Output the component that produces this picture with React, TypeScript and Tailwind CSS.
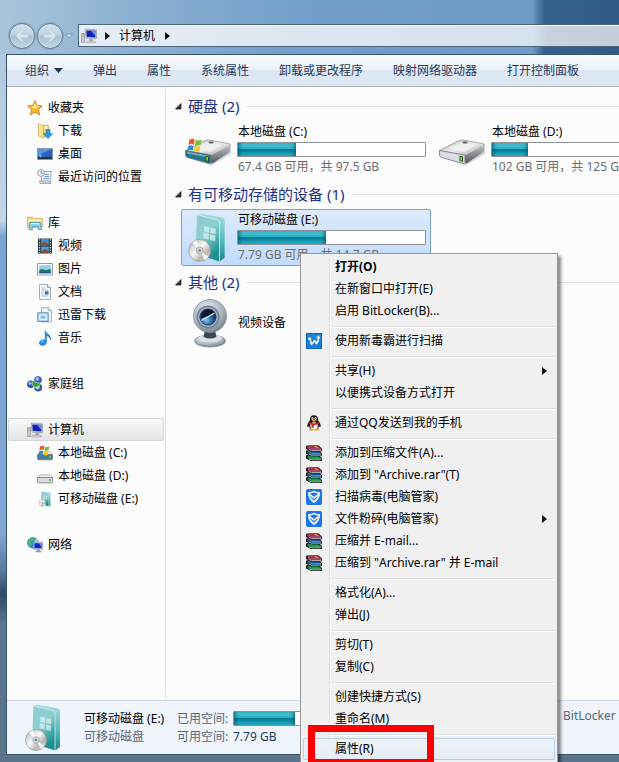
import type { ReactNode } from "react";

interface NavItem {
  label: string;
  icon: ReactNode;
  root?: boolean;
  active?: boolean;
}

interface MenuItem {
  label: string;
  icon?: ReactNode;
  bold?: boolean;
  submenu?: boolean;
  highlighted?: boolean;
}

const ComputerIcon = () => (
  <svg width="16" height="16" viewBox="0 0 16 16" aria-hidden="true">
    <path d="M.5 5.5h3v9h-3z" fill="#c9ced3" stroke="#8b9299" strokeWidth=".7" />
    <path d="M1.3 7h1.4M1.3 8.5h1.4" stroke="#6e9a55" strokeWidth=".7" />
    <path d="M4 1.2l11.5.6v9L5 10.2z" fill="#d5d9dd" stroke="#8d949b" strokeWidth=".7" />
    <path d="M5.2 2.4l9.2.4v6.8l-8.6-.5z" fill="#1420b4" />
    <path d="M10 2.7l4.4.1v5.4z" fill="#6a86ef" />
    <path d="M8.5 11h3.2l.6 2H8z" fill="#a3a9b0" />
    <path d="M5.5 13.2h8.5l1 1.6H4.5z" fill="#d7dade" stroke="#8d949b" strokeWidth=".5" />
  </svg>
);

const StarIcon = () => (
  <svg width="16" height="16" viewBox="0 0 16 16" aria-hidden="true">
    <path d="M8 .7l2.1 4.8 5.2.5-3.9 3.5 1.2 5.4L8 12l-4.7 2.9 1.3-5.4L.7 6l5.1-.5z" fill="#fbb52e" stroke="#e0702b" strokeWidth=".9" />
    <path d="M8 2.8l1.4 3.5 3.3.4-5.2 1.8-4.2-1.7 3.2-.4z" fill="#fff09a" />
  </svg>
);

const DownloadIcon = () => (
  <svg width="16" height="16" viewBox="0 0 16 16" aria-hidden="true">
    <path d="M5 2.500h6.500v11.300H5z" fill="#f2cb5f" stroke="#cfa644" strokeWidth=".7" />
    <path d="M1.500.8L6.500 2.500v12.700L1.500 13z" fill="#f9e394" stroke="#cfa644" strokeWidth=".7" />
    <path d="M7.300 3.200h3.500v3H7.300z" fill="#fff0b8" />
    <path d="M9.300 6.500h3.600v4.200h2.600l-4.400 4.800-4.400-4.800h2.600z" fill="#2a9fe6" stroke="#1971b7" strokeWidth=".7" />
  </svg>
);

const DesktopIcon = () => (
  <svg width="16" height="16" viewBox="0 0 16 16" aria-hidden="true">
    <path d="M.5 2.500h15v11H.5z" fill="#2b5ebd" stroke="#8798ad" />
    <path d="M1 3h14L1 9.500z" fill="#5a95e2" />
    <path d="M1 11h14v2H1z" fill="#28303d" />
    <path d="M1.500 9.500l2-1 1.500 1.500-1.500 1.500z" fill="#67c5e9" />
  </svg>
);

const RecentIcon = () => (
  <svg width="16" height="16" viewBox="0 0 16 16" aria-hidden="true">
    <path d="M5.500 2.500h9.300l-1 2v8H4.500v-9z" fill="#eef1f4" stroke="#8c9aa8" strokeWidth=".8" />
    <path d="M2.500 12h9.500l2 2.500H3z" fill="#d3d8dd" stroke="#8c9aa8" strokeWidth=".8" />
    <path d="M7.500 5.500h4.500M7.500 7.500h4.500M6.500 9.700h5.500" stroke="#6d9cc8" />
    <circle cx="4" cy="4" r="3.400" fill="#f2f4f6" stroke="#8e979f" strokeWidth=".9" />
    <path d="M4 2v2.200h1.800" fill="none" stroke="#5e6873" strokeWidth=".8" />
  </svg>
);

const LibraryIcon = () => (
  <svg width="16" height="16" viewBox="0 0 16 16" aria-hidden="true">
    <path d="M.6 2.200h5l1.200 1.300h8.600v8.800H.6z" fill="#f2d67a" stroke="#c5a24c" strokeWidth=".7" />
    <path d="M1.200 5.200h13.600" stroke="#fff3c4" strokeWidth="1.400" />
    <path d="M2 14.500l1-7h10.200l1.300 7h-3.300v-3H5.300v3z" fill="#8ed6ee" stroke="#3c93b8" strokeWidth=".8" />
    <path d="M4 8.500h8.200" stroke="#d6f4fd" />
  </svg>
);

const VideoIcon = () => (
  <svg width="16" height="16" viewBox="0 0 16 16" aria-hidden="true">
    <path d="M1 .5h14v15H1z" fill="#26333b" />
    <path d="M4.200 1h7.600v6.500H4.200z" fill="#3d93d2" />
    <path d="M4.200 8.500h7.600V15H4.200z" fill="#4aa3dd" />
    <path d="M4.200 5.500l3-2 4.600 3v1H4.200zM4.200 13.500l4-2.500 3.600 2v2H4.200z" fill="#8c4c3a" />
    <path d="M2.600 1.300v14M13.400 1.300v14" stroke="#d6e6e4" strokeWidth="1.300" strokeDasharray="1.300 1.300" />
  </svg>
);

const PictureIcon = () => (
  <svg width="16" height="16" viewBox="0 0 16 16" aria-hidden="true">
    <path d="M.5 2.500h15v11.500H.5z" fill="#fff" stroke="#8f9ba5" />
    <path d="M2.200 4.200h11.600v8H2.200z" fill="#8bd3f0" />
    <path d="M2.200 9.500c3-3 5-1 6-.5s3-1 5.600-1v4.200H2.200z" fill="#27766f" />
    <path d="M2.200 10.800h11.600v1.400H2.200z" fill="#1f5a8d" />
  </svg>
);

const DocumentIcon = () => (
  <svg width="16" height="16" viewBox="0 0 16 16" aria-hidden="true">
    <path d="M2.500.6h8l3 3v11.800h-11z" fill="#fafcfe" stroke="#8494a4" strokeWidth=".8" />
    <path d="M10.500.6v3h3" fill="#d8e2ec" stroke="#8494a4" strokeWidth=".8" />
    <path d="M4.300 4h4M4.300 6h7.200M4.300 8h2.400M4.300 10h2.400M4.300 12h7.200" stroke="#a2b2c2" strokeWidth=".9" />
    <path d="M7.800 7.200h3.800v3.400H7.800z" fill="#3e74a8" />
  </svg>
);

const ThunderIcon = () => (
  <svg width="16" height="16" viewBox="0 0 16 16" aria-hidden="true">
    <path d="M4.500.7h6.800l3.200 3v11.200h-10z" fill="#f2f7fb" stroke="#8fa4b8" strokeWidth=".8" />
    <path d="M11.300.7v3h3.200" fill="none" stroke="#8fa4b8" strokeWidth=".8" />
    <path d="M.8 5.800h10.400v8.600H.8z" fill="#b9dcf4" stroke="#5d8fbd" />
    <path d="M3 8h6v4.400H3z" fill="#7fbdea" stroke="#fff" />
  </svg>
);

const MusicIcon = () => (
  <svg width="16" height="16" viewBox="0 0 16 16" aria-hidden="true">
    <path d="M8.200.5c.6 3 5.800 3.400 5.400 9.300-.7-2.400-2-3.700-4.100-4v6.800C9 15 6.800 15.700 5 15.400c-2.600-.4-3.500-2.400-2-4.200 1.300-1.500 3.500-1.700 5.200-.9z" fill="#2a90dc" stroke="#1c68ac" strokeWidth=".5" />
    <path d="M3.800 12.200c.7-1 1.800-1.500 3-1.400" fill="none" stroke="#a2dcfb" />
  </svg>
);

const HomegroupIcon = () => (
  <svg width="16" height="16" viewBox="0 0 16 16" aria-hidden="true">
    <circle cx="11" cy="4" r="3.800" fill="#3656b8" />
    <circle cx="10.300" cy="3" r="1.900" fill="#9db4ef" />
    <circle cx="3.800" cy="8.300" r="3.700" fill="#2f4fae" />
    <circle cx="3" cy="7.300" r="1.700" fill="#94b0ee" />
    <circle cx="11.200" cy="11.500" r="4" fill="#3b5cae" />
    <circle cx="10.500" cy="10.800" r="2.400" fill="#b3d9dd" />
    <path d="M6.500 4.500c-2.500 2-1 5.700.5 6.300 3 1.200 6.500-.8 6.500-4.300-2 1-5 .5-7-2z" fill="#3da13a" stroke="#d6efd3" strokeWidth=".6" />
  </svg>
);

const WinFlag = () => (
  <g>
    <path d="M1 1.500Q3.200 0 5.200 1.200L4.500 5Q2.600 4 .4 5.200z" fill="#ea5b24" />
    <path d="M6 1.400Q8 2.500 10.400 1.200L9.700 5Q7.300 6.300 5.300 5.200z" fill="#7cbd3b" />
    <path d="M.2 6.200Q2.300 5 4.300 6L3.600 9.800Q1.700 8.700-.6 10z" fill="#2f8ed8" />
    <path d="M5.100 6.200Q7.100 7.300 9.500 6L8.800 9.800Q6.500 11 4.400 10z" fill="#fac726" />
  </g>
);

const SmallDriveIcon = ({ system = false }: { system?: boolean }) => (
  <svg width="16" height="16" viewBox="0 0 16 16" aria-hidden="true">
    <path d="M3 6.700h10l2.500 3H.5z" fill="#eceeef" stroke="#979da2" strokeWidth=".6" />
    <path d="M.5 9.500h15v4.300q0 1-1 1h-13q-1 0-1-1z" fill={system ? "#467d91" : "#dadcde"} stroke="#74797e" strokeWidth=".8" />
    <path d="M12 11h2v2h-2z" fill="#59c53a" />
    {system && (
      <g transform="translate(2 0)">
        <WinFlag />
      </g>
    )}
  </svg>
);

const NetworkIcon = () => (
  <svg width="16" height="16" viewBox="0 0 16 16" aria-hidden="true">
    <circle cx="5.800" cy="5.800" r="5.400" fill="#2c8fd0" stroke="#297aa8" strokeWidth=".5" />
    <path d="M2 2.500Q5 0 7.200 1L5.800 3.700 3.500 5 4.500 7 3 9.500.8 6z" fill="#4fbe6c" />
    <path d="M7.500 2.500l2.500.3 1 3-3 .5z" fill="#a7e3dc" />
    <path d="M6.300 5.300l9.200-.3v7.200H6.800z" fill="#d4d9df" stroke="#7f878f" strokeWidth=".6" />
    <path d="M7.300 6.200l7.300-.2v5.300H7.500z" fill="#1924bd" />
    <path d="M11.500 6.100h3.100v4z" fill="#6f92f3" />
    <path d="M10 12.500h3v1.500h1.500v1.200h-6V14H10z" fill="#9299a1" />
  </svg>
);

// Teal software box with a disc leaning against it
const BoxDisc = ({ className }: { className: string }) => (
  <svg className={className} viewBox="0 0 40 48" aria-hidden="true">
    <defs>
      <linearGradient id="boxFront" x1="0" y1="0" x2=".5" y2="1">
        <stop offset="0" stopColor="#8fc9cf" />
        <stop offset=".5" stopColor="#8ad0d3" />
        <stop offset="1" stopColor="#1c8f90" />
      </linearGradient>
      <linearGradient id="boxSide" x1="0" y1="0" x2="0" y2="1">
        <stop offset="0" stopColor="#a9dfe3" />
        <stop offset=".6" stopColor="#4fb6b8" />
        <stop offset="1" stopColor="#1f8586" />
      </linearGradient>
      <linearGradient id="discShine" x1="0" y1="0" x2="1" y2="1">
        <stop offset="0" stopColor="#a9adb1" />
        <stop offset=".45" stopColor="#f8f8f7" />
        <stop offset=".7" stopColor="#b9b4ae" />
        <stop offset="1" stopColor="#eef0f1" />
      </linearGradient>
    </defs>
    <path d="M9.500 1.500L29 6.500q2 .6 2 2.500v37.500L8 39z" fill="url(#boxFront)" />
    <path d="M10 1.500q2-1 4-.7L33 4q3 .6 3 3v36l-5 3.500V9q0-1.800-2-2.500z" fill="url(#boxSide)" />
    <path d="M9.500 1.800L29 6.700q2 .6 2 2.300v37" fill="none" stroke="#d0f1f1" strokeWidth=".8" />
    <path d="M16.500 12.500l4.800 1.100-.3 5.300-4.900-1.200zM22.500 13.900l5 1.200-.3 5.300-5-1.200zM16 19l4.900 1.200-.3 5.300-5-1.200zM22.100 20.500l5 1.200-.3 5.300-5-1.200z" fill="#d5f1f2" opacity=".75" />
    <circle cx="12" cy="36" r="10.500" fill="url(#discShine)" stroke="#92979b" strokeWidth=".7" />
    <path d="M12 36L5 28.200l4-2.200zM12 36l8.500 6-3.500 3z" fill="#fff" opacity=".8" />
    <circle cx="12" cy="36" r="3.300" fill="#d6dadd" stroke="#8f9498" strokeWidth=".7" />
    <circle cx="12" cy="36" r="1.300" fill="#7b8083" />
  </svg>
);

const DriveIcon = ({ system = false }: { system?: boolean }) => (
  <svg width="48" height="34" viewBox="0 0 48 34" aria-hidden="true">
    <defs>
      <linearGradient id="driveTop" x1="0" y1="0" x2="1" y2="1">
        <stop offset="0" stopColor="#b3b5b7" />
        <stop offset=".5" stopColor="#ededed" />
        <stop offset="1" stopColor="#989a9c" />
      </linearGradient>
      <linearGradient id="driveSide" x1="0" y1="0" x2="0" y2="1">
        <stop offset="0" stopColor="#bfc1c3" />
        <stop offset="1" stopColor="#515457" />
      </linearGradient>
    </defs>
    <path d="M3 23l24 8.500L47 18v3L27 33z" fill="#d9dadb" />
    <path d="M1.500 17.500L21 7.500q2-.9 4-.5l19.500 3.500q2 .4 2 2L27 23z" fill="url(#driveTop)" stroke="#7b7d7f" strokeWidth=".6" />
    <path d="M11 15l11-5.500 16 2.700-12 7z" fill="#f3f3f3" opacity=".7" />
    <path d="M27 22.500l19.500-10V17q0 1.500-1.500 2.400L28.500 30.500q-1.500.6-1.500-1.500z" fill="url(#driveSide)" />
    <path d="M1.500 17.500L27 22v7.500q0 1.500-2 1L3.500 24.500q-2-.6-2-2.500z" fill={system ? "#27748f" : "#dddce6"} stroke="#727578" strokeWidth=".8" />
    {system && <path d="M3 18.800l22 4v2L3 20.500z" fill="#6fb2bf" />}
    <path d="M21.500 22.800l3.500.7v5.300l-3.500-.8z" fill="#1d3c14" />
    <path d="M22.300 23.800l1.800.3v3.700l-1.800-.4z" fill="#74e832" />
    <ellipse cx="27" cy="9.500" rx="2.500" ry="1" fill="#55585a" />
    {system && (
      <g transform="translate(4 5) scale(1.300)">
        <WinFlag />
      </g>
    )}
  </svg>
);

const WebcamIcon = () => (
  <svg width="38" height="50" viewBox="0 0 38 50" aria-hidden="true">
    <defs>
      <radialGradient id="camBody" cx=".4" cy=".3" r=".8">
        <stop offset="0" stopColor="#e6eaee" />
        <stop offset=".6" stopColor="#a9b3bd" />
        <stop offset="1" stopColor="#66727f" />
      </radialGradient>
      <radialGradient id="camLens" cx=".4" cy=".7" r=".7">
        <stop offset="0" stopColor="#7fc3f1" />
        <stop offset=".5" stopColor="#2a66a8" />
        <stop offset="1" stopColor="#0f1e38" />
      </radialGradient>
    </defs>
    <ellipse cx="19" cy="43" rx="15.500" ry="6" fill="url(#camBody)" stroke="#6e7984" strokeWidth=".7" />
    <ellipse cx="19" cy="40.500" rx="12" ry="3.800" fill="#dbe0e5" />
    <path d="M14 32h10l1.500 7q-6 3-13 0z" fill="#3c4652" />
    <circle cx="19" cy="18" r="16.500" fill="url(#camBody)" stroke="#828d98" strokeWidth=".8" />
    <circle cx="17" cy="19" r="11.500" fill="#6f8398" />
    <circle cx="17" cy="19" r="10" fill="#9fb3c8" />
    <circle cx="17" cy="19" r="8" fill="url(#camLens)" stroke="#2b3747" />
    <path d="M10 20.500Q9.500 12.500 17 11.500q5 0 7 4z" fill="#0f1828" />
    <path d="M10.500 22.500l13-7.500" stroke="#d8effc" strokeWidth="1.300" />
  </svg>
);

const DubaIcon = () => (
  <svg width="16" height="16" viewBox="0 0 16 16" aria-hidden="true">
    <path d="M0 0h16v16H0z" fill="#0863b5" />
    <path d="M1 1h14v14H1z" fill="#1c82d6" />
    <path d="M2 5.500h2.200l.8 4.800q.3 1.500 1.400.3l1.800-2.500q.8-1 1.200.2l.4 1.700q.5 1 1.300-.2Q12.500 8 12.500 5" fill="none" stroke="#fff" strokeWidth="1.500" />
    <path d="M10.200 5l2.500-2.700L14.300 5.500z" fill="#fff" />
  </svg>
);

const QQIcon = () => (
  <svg width="16" height="16" viewBox="0 0 16 16" aria-hidden="true">
    <path d="M8 .2c3 0 4.300 2 4.200 5.300 1.600 2 3 4.500 2.300 6.300-.6.600-1.300-.2-1.700-.8-.3 3-2 4-4.800 4s-4.500-1-4.800-4c-.4.600-1.100 1.400-1.700.8C.8 10 2.200 7.500 3.800 5.500 3.700 2.200 5 .2 8 .2z" fill="#17181b" />
    <ellipse cx="8" cy="11" rx="3.700" ry="3.700" fill="#fff" />
    <ellipse cx="6.500" cy="3.500" rx="1.100" ry="1.500" fill="#fff" />
    <ellipse cx="9.500" cy="3.500" rx="1.100" ry="1.500" fill="#fff" />
    <circle cx="6.800" cy="3.700" r=".5" />
    <circle cx="9.200" cy="3.700" r=".5" />
    <path d="M5.300 5.600q2.700-1.200 5.400 0-2.700 2.200-5.400 0z" fill="#f8a717" />
    <path d="M3.300 7q4.700 2.500 9.400 0l.4 1.700q-2.300 1.300-5 1.300l-.4 2.800H5.500V9.700q-1.500-.3-2.600-1z" fill="#e3201c" />
    <path d="M2.800 14.500q1.500-1.800 4.700 0-.7 1.300-2.500 1.300t-2.200-1.300zM8.500 14.500q3.200-1.800 4.700 0-.4 1.300-2.200 1.300t-2.500-1.300z" fill="#f5a21b" />
  </svg>
);

const Book = ({ top, cover, shine }: { top: number; cover: string; shine: string }) => (
  <g transform={`translate(0 ${top})`}>
    <path d="M0 1.200Q0 .2 1.500.2L12 0l4 3.300v3H5L0 3.800z" fill="#150c10" />
    <path d="M1.300 1L11.700.7 15 3.200H5z" fill={cover} />
    <path d="M5 3.400h10.500v1.500H5L.8 2.600V1.500z" fill={cover} />
    <path d="M2 1.400L5.500 3.500h9.700" fill="none" stroke={shine} strokeWidth=".6" />
    <path d="M2.500 3.900L5.300 5.200h10" fill="none" stroke="#f3e6dd" strokeWidth=".7" />
  </g>
);

const RarIcon = () => (
  <svg width="16" height="16" viewBox="0 0 16 16" aria-hidden="true">
    <Book top={9.700} cover="#128241" shine="#6fd08c" />
    <Book top={5} cover="#125c9f" shine="#77b5e5" />
    <Book top={0.300} cover="#ac1c5c" shine="#ee8ab7" />
    <path d="M2 1.200L11.500 1l2.500 1.800H5.200z" fill="#9a4238" />
    <path d="M8 1h2l2.500 2h-2z" fill="#d9a441" />
  </svg>
);

const ShieldIcon = () => (
  <svg width="16" height="16" viewBox="0 0 16 16" aria-hidden="true">
    <rect width="16" height="16" rx="2" fill="#1c74ee" />
    <path d="M8 1.800q3 1.500 6 1.500 0 7-6 11-6-4-6-11 3 0 6-1.500z" fill="#fff" />
    <path d="M8 3.300q2.200 1.100 4.600 1.300L8 8 3.400 4.600Q5.800 4.400 8 3.300z" fill="#1c74ee" />
    <path d="M4 6.700L8 10l4-3.300-.8 2L8 11.800 4.800 8.700z" fill="#1c74ee" />
  </svg>
);

const Arrow = () => (
  <svg width="5" height="8" viewBox="0 0 5 8" aria-hidden="true">
    <path d="M0 0l5 4-5 4z" fill="#111" />
  </svg>
);

const toolbar = ["弹出", "属性", "系统属性", "卸载或更改程序", "映射网络驱动器", "打开控制面板"];

const navGroups: NavItem[][] = [
  [
    { label: "收藏夹", icon: <StarIcon />, root: true },
    { label: "下载", icon: <DownloadIcon /> },
    { label: "桌面", icon: <DesktopIcon /> },
    { label: "最近访问的位置", icon: <RecentIcon /> },
  ],
  [
    { label: "库", icon: <LibraryIcon />, root: true },
    { label: "视频", icon: <VideoIcon /> },
    { label: "图片", icon: <PictureIcon /> },
    { label: "文档", icon: <DocumentIcon /> },
    { label: "迅雷下载", icon: <ThunderIcon /> },
    { label: "音乐", icon: <MusicIcon /> },
  ],
  [{ label: "家庭组", icon: <HomegroupIcon />, root: true }],
  [
    { label: "计算机", icon: <ComputerIcon />, root: true, active: true },
    { label: "本地磁盘 (C:)", icon: <SmallDriveIcon system /> },
    { label: "本地磁盘 (D:)", icon: <SmallDriveIcon /> },
    { label: "可移动磁盘 (E:)", icon: <BoxDisc className="h-4 w-4" /> },
  ],
  [{ label: "网络", icon: <NetworkIcon />, root: true }],
];

const menuGroups: MenuItem[][] = [
  [
    { label: "打开(O)", bold: true },
    { label: "在新窗口中打开(E)" },
    { label: "启用 BitLocker(B)..." },
  ],
  [{ label: "使用新毒霸进行扫描", icon: <DubaIcon /> }],
  [{ label: "共享(H)", submenu: true }, { label: "以便携式设备方式打开" }],
  [{ label: "通过QQ发送到我的手机", icon: <QQIcon /> }],
  [
    { label: "添加到压缩文件(A)...", icon: <RarIcon /> },
    { label: '添加到 "Archive.rar"(T)', icon: <RarIcon /> },
    { label: "扫描病毒(电脑管家)", icon: <ShieldIcon /> },
    { label: "文件粉碎(电脑管家)", icon: <ShieldIcon />, submenu: true },
    { label: "压缩并 E-mail...", icon: <RarIcon /> },
    { label: '压缩到 "Archive.rar" 并 E-mail', icon: <RarIcon /> },
  ],
  [{ label: "格式化(A)..." }, { label: "弹出(J)" }],
  [{ label: "剪切(T)" }, { label: "复制(C)" }],
  [{ label: "创建快捷方式(S)" }, { label: "重命名(M)" }],
  [{ label: "属性(R)", highlighted: true }],
];

const UsageBar = ({ percent, label }: { percent: number; label: string }) => (
  <div
    role="progressbar"
    aria-label={label}
    aria-valuenow={percent}
    className="h-[15px] rounded-[1px] border border-[#8e9296] bg-white"
  >
    <div
      className="h-full bg-[linear-gradient(to_bottom,#55d0e0_0%,#25adc3_45%,#067a95_50%,#0f8ba5_70%,#2cc6dc_100%)] shadow-[inset_3px_0_4px_-2px_#07586d,inset_-3px_0_4px_-2px_#07586d]"
      style={{ width: `${percent}%` }}
    />
  </div>
);

const Section = ({ title, children }: { title: string; children: ReactNode }) => (
  <section>
    <div className="flex h-[22px] items-center pl-2">
      <svg width="8" height="8" viewBox="0 0 8 8" aria-hidden="true">
        <path d="M7 1.500v5.500H1.500z" fill="#3b3b3b" stroke="#111" strokeWidth=".7" />
      </svg>
      <h2 className="ml-1.5 whitespace-nowrap text-[15px] leading-5 text-[#1e3287]">{title}</h2>
      <div className="ml-2 h-px flex-1 bg-[#e0e2e5]" />
    </div>
    <div className="mt-1 flex gap-1 pl-[15px]">{children}</div>
  </section>
);

interface DriveTileProps {
  name: string;
  detail: string;
  percent: number;
  icon: ReactNode;
  selected?: boolean;
}

const DriveTile = ({ name, detail, percent, icon, selected = false }: DriveTileProps) => (
  <div
    className={`flex h-[57px] w-[250px] shrink-0 rounded-xs border pr-1 ${
      selected
        ? "border-[#7da2ce] bg-[linear-gradient(to_bottom,#dcebfc,#c1dbfc)]"
        : "border-transparent"
    }`}
  >
    <div className="flex w-[55px] shrink-0 items-center justify-center pr-1">{icon}</div>
    <div className="flex min-w-0 flex-1 flex-col gap-px whitespace-nowrap pt-px">
      <div className="pl-px leading-[18px]">{name}</div>
      <UsageBar percent={percent} label={name} />
      <div className="pl-px leading-[18px] text-[#6d6d6d]">{detail}</div>
    </div>
  </div>
);

const ContextMenu = () => (
  <div
    role="menu"
    className="absolute left-[300px] top-[253px] w-[258px] border border-[#979797] bg-[#f0f0f0] p-0.5 shadow-[3px_3px_3px_rgba(0,0,0,0.45)]"
  >
    <div className="bg-[linear-gradient(to_right,transparent_26px,#e0e0e0_26px,#e0e0e0_27px,#fff_27px,#fff_28px,transparent_28px)]">
      {menuGroups.map((group, index) => (
        <div key={index}>
          {index > 0 && <div className="mb-0.5 ml-7 mt-1 h-0.5 border-b border-t border-b-white border-t-[#e0e0e0]" />}
          {group.map((item) => (
            <button
              key={item.label}
              role="menuitem"
              className={`relative flex h-[22px] w-full items-center whitespace-nowrap text-left ${
                item.highlighted
                  ? "rounded-xs bg-[linear-gradient(to_bottom,#f0f3f7,#e3ecf5)] shadow-[inset_0_0_0_1px_#b3cfe9]"
                  : ""
              } ${item.bold ? "font-bold" : ""}`}
            >
              <span className="flex w-8 shrink-0 justify-start pl-[3px]">{item.icon}</span>
              <span className="flex-1">{item.label}</span>
              {item.submenu && (
                <span className="pr-2">
                  <Arrow />
                </span>
              )}
              {item.highlighted && (
                <span className="absolute -top-[13px] left-[5px] h-[38px] w-[126px] border-[7px] border-b-4 border-[#fe0000]" />
              )}
            </button>
          ))}
        </div>
      ))}
    </div>
  </div>
);

const NavButton = ({ label, back = false }: { label: string; back?: boolean }) => (
  <button
    aria-label={label}
    className="flex h-[26px] w-[26px] items-center justify-center rounded-full border border-[#5d7a95] bg-[linear-gradient(to_bottom,#d3e1ec_0%,#c0d2e0_45%,#a9c2d6_50%,#bcd5e6_100%)] shadow-[inset_0_0_0_1px_#d5e3ee,0_0_0_1px_#8eabc4]"
  >
    <svg width="14" height="12" viewBox="0 0 14 12" aria-hidden="true">
      <path
        d={back ? "M6 .8L1 6l5 5.200h2.800L5.500 7.500H13v-3H5.500L8.800.8z" : "M8 .8L13 6l-5 5.200H5.200l3.300-3.700H1v-3h7.500L5.200.8z"}
        fill="#d9e6ee"
        stroke="#b4c8d6"
        strokeWidth=".4"
      />
    </svg>
  </button>
);

const App = () => {
  return (
    <div className="relative flex min-h-screen w-full flex-col overflow-hidden bg-[linear-gradient(to_bottom,#a9c5df_0%,#b7cde0_15%,#c4d5e4_29%,#7ba2d2_31%,#82a6d2_70%,#55789b_75%,#2f4b60_78%,#5b7890_82%,#5a7489_100%)] font-['Noto_Sans','Noto_Sans_CJK_SC',sans-serif] text-xs text-black">
      <header className="bg-[linear-gradient(to_right,#a9c5dc_0%,#8db1d2_20%,#739fca_48%,#6e9bc6_83%,#6f9cc5_86%,#34618b_88%,#315b84_100%)] pt-[23px]">
        <div className="flex h-[31px] items-start pl-[9px]">
          <div className="flex gap-0.5">
            <NavButton label="后退" back />
            <NavButton label="前进" />
          </div>
          <button aria-label="最近浏览的位置" className="ml-0.5 mt-2.5">
            <svg width="8" height="6" viewBox="0 0 8 6" aria-hidden="true">
              <path d="M.5 1h7L4 5z" fill="#d3e3ef" stroke="#6d8ba6" strokeWidth=".8" />
            </svg>
          </button>
          <nav
            aria-label="地址"
            className="ml-[5px] mt-px flex h-[23px] flex-1 items-center border border-r-0 border-[#4a6480] bg-[linear-gradient(to_right,#e6edf4_0%,#dce5ef_50%,#d6e2ed_84%,#c8d2dc_87%,#c5cfd9_100%)] pl-0.5 shadow-[inset_0_1px_0_#f7fafc]"
          >
            <ComputerIcon />
            <span className="ml-2">
              <Arrow />
            </span>
            <a href="#computer" className="ml-[9px] leading-5">
              计算机
            </a>
            <span className="ml-2.5">
              <Arrow />
            </span>
          </nav>
        </div>
      </header>

      <div className="mb-[7px] ml-1.5 flex flex-1 flex-col border border-r-0 border-[#38536f] bg-[#fcfcfd]">
        <div className="flex h-8 shrink-0 items-center gap-[30px] whitespace-nowrap border-b border-[#a2b2c3] bg-[linear-gradient(to_bottom,#fafdff_0%,#e9f1fa_49%,#dce6f4_50%,#dfe9f5_100%)] pl-[18px] text-[#1e395b]">
          <button className="flex items-center gap-[5px]">
            组织
            <svg width="9" height="5" viewBox="0 0 9 5" aria-hidden="true">
              <path d="M0 0h9L4.500 5z" fill="#1e395b" />
            </svg>
          </button>
          {toolbar.map((label) => (
            <button key={label}>{label}</button>
          ))}
        </div>

        <div className="flex flex-1">
          <nav aria-label="导航窗格" className="flex w-[159px] shrink-0 flex-col gap-[23px] border-r border-[#dce4ef] pb-4 pl-px pr-px pt-[9px]">
            {navGroups.map((group) => (
              <ul key={group[0].label}>
                {group.map((item) => (
                  <li key={item.label}>
                    <a
                      href={`#${item.label}`}
                      className={`flex h-[23px] items-center gap-[5px] whitespace-nowrap rounded-xs border ${
                        item.root ? "pl-[18px]" : "pl-7"
                      } ${
                        item.active
                          ? "border-[#d5d7d9] bg-[linear-gradient(to_bottom,#f8f8f8,#e4e5e6)]"
                          : "border-transparent"
                      }`}
                    >
                      {item.icon}
                      {item.label}
                    </a>
                  </li>
                ))}
              </ul>
            ))}
          </nav>

          <main className="flex min-w-0 flex-1 flex-col gap-[5px] overflow-hidden pt-2">
            <Section title="硬盘 (2)">
              <DriveTile name="本地磁盘 (C:)" detail="67.4 GB 可用，共 97.5 GB" percent={31} icon={<DriveIcon system />} />
              <DriveTile name="本地磁盘 (D:)" detail="102 GB 可用，共 125 GB" percent={19} icon={<DriveIcon />} />
            </Section>
            <Section title="有可移动存储的设备 (1)">
              <DriveTile
                name="可移动磁盘 (E:)"
                detail="7.79 GB 可用，共 14.7 GB"
                percent={47}
                icon={<BoxDisc className="h-[50px] w-[42px]" />}
                selected
              />
            </Section>
            <Section title="其他 (2)">
              <div className="flex h-[52px] w-[250px] items-center">
                <div className="flex w-[57px] justify-center">
                  <WebcamIcon />
                </div>
                视频设备
              </div>
            </Section>
          </main>
        </div>

        <footer className="flex h-[54px] shrink-0 items-center whitespace-nowrap border-t border-[#ccd8e6] bg-[#f0f4fb] text-[#5a6779]">
          <div className="flex w-[77px] shrink-0 justify-center pr-1">
            <BoxDisc className="h-12 w-10" />
          </div>
          <div className="w-[93px] shrink-0 leading-[18px]">
            <div className="text-black">可移动磁盘 (E:)</div>
            <div>可移动磁盘</div>
          </div>
          <dl className="grid w-[386px] shrink-0 grid-cols-[56px_130px] items-center leading-[18px]">
            <dt>已用空间:</dt>
            <dd>
              <UsageBar percent={48} label="已用空间" />
            </dd>
            <dt>可用空间:</dt>
            <dd className="text-[#1e395b]">7.79 GB</dd>
          </dl>
          <div className="self-start pt-1.5 leading-[18px]">BitLocker</div>
        </footer>
      </div>

      <ContextMenu />
    </div>
  );
};

export default App;
